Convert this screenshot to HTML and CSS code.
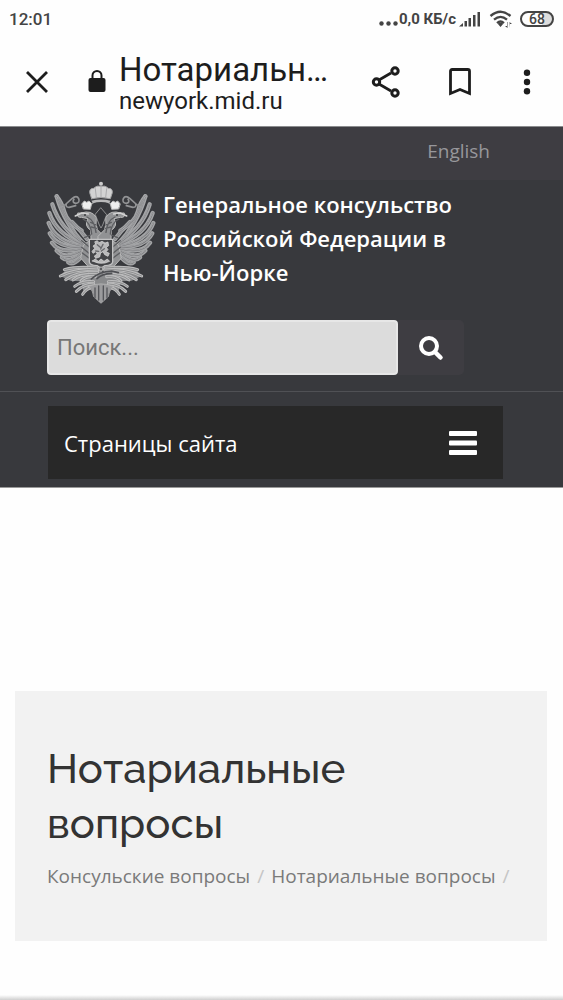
FILE: index.html
```html
<!DOCTYPE html>
<html lang="ru">
<head>
<meta charset="utf-8">
<meta name="viewport" content="width=device-width, initial-scale=1">
<title>Нотариальные вопросы</title>
<link rel="stylesheet" href="styles.css">
</head>
<body>
<div class="status">
  <span class="clock">12:01</span>
  <div class="indicators">
    <svg class="dots" width="19" height="5" viewBox="0 0 19 5"><circle cx="2.5" cy="2.5" r="2.2"/><circle cx="9.5" cy="2.5" r="2.2"/><circle cx="16.5" cy="2.5" r="2.2"/></svg>
    <span class="speed">0,0 КБ/с</span>
    <svg class="signal" width="22" height="16" viewBox="0 0 22 16"><path d="M0 15.500L4 12v3.500zM5.500 10h2.500v5.500H5.500zM9.500 7H12v8.500H9.500zM14 4h2.500v11.500H14zM18.500 1H21v14.500h-2.500z"/></svg>
    <svg class="wifi" width="24" height="18" viewBox="0 0 24 18"><path d="M1.500 6Q11.500-2.500 21.500 6M5 9.700Q11.500 4 18 9.700M8 13Q11.500 10 15 13" fill="none" stroke="#444" stroke-width="2.300"/><path d="M8.500 13.500Q11.500 12 14.500 13.500L11.500 17zM18 12v4h-2l2.500 2V12zM21 18v-4h2l-2.500-2z"/></svg>
    <span class="battery">68</span>
  </div>
</div>
<div class="browser">
  <button class="tool close" aria-label="Закрыть"><svg width="24" height="24" viewBox="0 0 24 24"><path d="M2 2l20 20M22 2L2 22" fill="none" stroke="#1d1d1d" stroke-width="2.800"/></svg></button>
  <svg class="lock" width="18" height="24" viewBox="0 0 18 24"><rect x="0.500" y="8" width="17" height="14" rx="2"/><path d="M4.500 9V5.500a4.500 4.500 0 0 1 9 0V9" fill="none" stroke="#1d1d1d" stroke-width="2"/></svg>
  <div class="address">
    <div class="tab-title">Нотариальн…</div>
    <div class="domain">newyork.mid.ru</div>
  </div>
  <div class="actions">
    <button class="tool" aria-label="Поделиться"><svg width="30" height="32" viewBox="0 0 30 32"><g fill="none" stroke="#1d1d1d"><path d="M8 14L20 7M8 18l12 7" stroke-width="2.700"/><g stroke-width="3"><circle cx="5.500" cy="16" r="3.200"/><circle cx="24" cy="5" r="3.200"/><circle cx="24" cy="27" r="3.200"/></g></g></svg></button>
    <button class="tool" aria-label="Добавить закладку"><svg width="24" height="30" viewBox="0 0 24 30"><path d="M2.500 26.500V4.200Q2.500 2.500 4.200 2.500h15.600q1.700 0 1.700 1.700v22.300L12 22.500z" fill="none" stroke="#1d1d1d" stroke-width="2.800"/></svg></button>
    <button class="tool" aria-label="Меню"><svg width="16" height="26" viewBox="0 0 16 26"><circle cx="8" cy="3.700" r="3.200"/><circle cx="8" cy="13" r="3.200"/><circle cx="8" cy="22.300" r="3.200"/></svg></button>
  </div>
</div>
<header class="site">
  <div class="languages"><a href="#">English</a></div>
  <div class="brand">
    <svg class="emblem" width="110" height="126" viewBox="17 28 330 378" fill="none" stroke-linecap="round" stroke-linejoin="round">
      <defs>
        <g id="feathers">
          <path d="M134 224Q72 158 49 77"/><path d="M130 218Q58 172 36 101"/><path d="M127 221Q48 190 27 127"/><path d="M126 226Q46 213 25 157"/><path d="M126 230Q51 231 28 188"/><path d="M128 233Q60 252 35 216"/><path d="M130 236Q75 270 49 240"/><path d="M133 239Q88 282 65 260"/><path d="M136 242Q102 289 84 275"/>
          <path d="M49 77Q64 94 72 124T124 180"/><path d="M140 205Q120 178 95 154"/>
        </g>
        <g id="tailfeathers">
          <path d="M170 292Q110 286 72 297"/><path d="M172 298Q110 292 60 316"/><path d="M172 305Q112 301 76 327"/><path d="M166 312Q120 308 98 328"/><path d="M165 318Q134 316 122 331"/>
          <path d="M160 333Q125 330 103 347"/><path d="M160 340Q130 340 108 362"/><path d="M161 348Q138 352 127 371"/>
        </g>
        <g id="half">
          <use href="#feathers" stroke="#a3a4a6" stroke-width="13"/>
          <use href="#feathers" stroke="#747578" stroke-width="4"/>
          <use href="#feathers" stroke="#c9c9ca" stroke-width="1.500"/>
          <path d="M60 316l18-20 104-8v58l-52 18-8-32-32-2z" fill="#88898b"/>
          <use href="#tailfeathers" stroke="#bdbdbe" stroke-width="9"/>
          <use href="#tailfeathers" stroke="#838486" stroke-width="2.500"/>
          <path d="M112 128Q108 142 124 140l19 4q-13 21 8 35l1 27-23 18-8 38 22 25 48-2v-88l-20-20q-6-20-3-36-14-25-45-14z" fill="#919294" stroke="#bababa" stroke-width="3"/>
          <path d="M128 145q24 12 26 45M140 139q23 10 27 46M124 210l24 20M124 230l22 18M126 247l20 15M151 155l17 8M153 169l15 4M132 201l19-8" stroke="#5c5d60" stroke-width="4"/>
          <path d="M105 136l19-9 20 3" stroke="#d1d1d1" stroke-width="5"/><circle cx="134" cy="133" r="3" fill="#3a3b3e"/>
          <path d="M60 99q7 10 17 1l18-16q14-12 20 0 5 12-9 14-12-3-5-12M78 100q-3 10 8 10l20-5M146 106q14-13 24-15" stroke="#929395" stroke-width="5"/>
          <path d="M125 99l7-8 7 4 7-4 8 8-4 17-20-1z" fill="#eee" stroke="#bbb" stroke-width="3"/>
        </g>
      </defs>
      <use href="#half"/><use href="#half" transform="matrix(-1 0 0 1 364 0)"/>
      <path d="M182 112l17 20-12 31-5 9-5-9-12-31z" fill="#333438" stroke="#bbb" stroke-width="2"/>
      <path d="M154 84l-6-18q-1-13 12-13 9-10 22-6 13-4 22 6 13 0 12 13l-6 18q-28-7-56 0z" fill="#d3d3d3" stroke="#a4a4a5" stroke-width="3"/>
      <path d="M165 54l3 27M182 48v31M199 54l-3 27" stroke="#aaaaac" stroke-width="3"/><circle cx="182" cy="39" r="6" fill="#ccc"/>
      <path d="M153 90q29-7 58 0l-5 7q-24-6-48 0z" fill="#b9b9ba"/>
      <path d="M147 206h70v67q0 10-23 12l-12 7-12-7q-23-2-23-12z" fill="#444548" stroke="#c2c2c3" stroke-width="4"/>
      <path d="M164 213l7-3 5 6 9-4 9 5 9-3 2 11-7 5 5 7-6 6 10 5-4 9-10-5-5-9-7 4-3 12-12 4-4-7 9-6-5-7-8 5-3-6 8-9-5-7 7-5zM156 271l9-6 9 7 8-7 9 7 10-7 7 7-14 5q-20 4-38-6z" fill="#b8b8b9" stroke="#dedede" stroke-width="2"/>
      <path d="M171 222l9 8M188 221l-7 14M166 241l9 1M192 234l-9 7" stroke="#68696c" stroke-width="4"/>
      <path d="M153 325q22-22 61-24l20 5M170 324q13-14 44-16M182 287l6 17" stroke="#4e4f53" stroke-width="5"/><circle cx="182" cy="295" r="6" fill="#5c5d60" stroke="#bbb" stroke-width="3"/>
      <path d="M144 347q15 13 16 31l22 20 22-20q1-18 16-31-38-15-76 0z" fill="#9b9b9d" stroke="#bbb" stroke-width="2"/>
      <path d="M164 352v30M175 346v42M189 346v42M200 352v30" stroke="#55565a" stroke-width="4"/>
    </svg>
    <div class="site-name">Генеральное консульство Российской Федерации в Нью-Йорке</div>
  </div>
  <form class="search">
    <input type="search" placeholder="Поиск..." aria-label="Поиск">
    <button type="button" aria-label="Найти"><svg width="26" height="26" viewBox="0 0 26 26"><g fill="none" stroke="#fff"><circle cx="11" cy="11" r="8" stroke-width="4"/><path d="M17 17l5.500 5.500" stroke-width="4.500" stroke-linecap="round"/></g></svg></button>
  </form>
  <nav class="navigation">
    <button class="pages"><span>Страницы сайта</span><svg width="28" height="24" viewBox="0 0 28 24" fill="#fff"><rect width="28" height="5" rx="1"/><rect y="9.500" width="28" height="5" rx="1"/><rect y="19" width="28" height="5" rx="1"/></svg></button>
  </nav>
</header>
<main class="content">
  <section class="page-heading">
    <h1>Нотариальные вопросы</h1>
    <nav class="breadcrumbs" aria-label="Навигация">
      <a href="#">Консульские вопросы</a><span>/</span><a href="#">Нотариальные вопросы</a><span>/</span>
    </nav>
  </section>
</main>
<div class="bottom-edge"></div>
</body>
</html>
```
FILE: styles.css
```css
* { box-sizing: border-box; }
body {
  margin: 0;
  min-height: 100vh;
  display: flex;
  flex-direction: column;
  background: #fefefe;
  color: #333;
  font-family: "Open Sans", "Noto Sans", sans-serif;
}
button { border: 0; padding: 0; background: none; font: inherit; color: inherit; }
a { color: inherit; text-decoration: none; }
svg { display: block; flex: none; }
.status {
  height: 38px;
  padding: 0 9px;
  display: flex;
  align-items: center;
  justify-content: space-between;
  font: 500 17px/20px Roboto, sans-serif;
  color: #444;
}
.status svg { fill: #444; }
.indicators { display: flex; align-items: center; }
.dots { margin: 8px 1px 0 0; }
.speed { margin-right: 3px; font-size: 15px; font-weight: 700; }
.signal { margin-right: 8px; }
.wifi { margin-right: 7px; }
.battery {
  width: 34px;
  height: 16px;
  border: 2px solid #444;
  border-radius: 8px;
  background: linear-gradient(90deg, #fefefe 68%, #ddd 68%);
  font-size: 14px;
  line-height: 12px;
  text-align: center;
}
.browser {
  height: 88px;
  padding: 0 28px 0 25px;
  display: flex;
  align-items: center;
  font-family: Roboto, sans-serif;
  color: #1d1d1d;
}
.browser svg { fill: #1d1d1d; }
.close { margin-right: 39px; }
.lock { margin-right: 13px; }
.address { flex: 1; min-width: 0; padding-top: 3px; white-space: nowrap; }
.tab-title { font-size: 33px; line-height: 34px; }
.domain { font-size: 24px; line-height: 28px; }
.actions { display: flex; align-items: center; gap: 47px; }
.site {
  border-top: 1px solid #8b8c8e;
  border-bottom: 1px solid #999;
  background: #38393d;
}
.languages {
  height: 53px;
  padding: 10px 73px 0 0;
  background: #3e3d42;
  color: #97979b;
  font-size: 19px;
  line-height: 28px;
  text-align: right;
}
.brand { display: flex; align-items: flex-start; padding: 0 47px 0 46px; gap: 7px; }
.site-name {
  max-width: 320px;
  padding-top: 7px;
  color: #fff;
  font-size: 22px;
  font-weight: 600;
  line-height: 34px;
}
.search {
  display: flex;
  margin: 14px 99px 16px 47px;
}
.search input {
  flex: 1;
  min-width: 0;
  height: 55px;
  padding: 0 8px;
  border: 2px solid #e7e7e7;
  border-radius: 4px;
  background: #dcdcdc;
  font: 22px/28px Roboto, sans-serif;
}
.search input::placeholder { color: #777; opacity: 1; }
.search button {
  width: 66px;
  display: grid;
  place-items: center;
  border-radius: 0 5px 5px 0;
  background: #3e3d42;
}
.navigation { padding: 14px 60px 8px 48px; border-top: 1px solid #505155; }
.pages {
  width: 100%;
  height: 73px;
  padding: 0 26px 0 16px;
  display: flex;
  align-items: center;
  justify-content: space-between;
  background: #282828;
  color: #fff;
  font-size: 22px;
}
.content { flex: 1; padding: 203px 16px 0 15px; }
.page-heading { padding: 50px 32px; background: #f2f2f2; }
h1 {
  margin: 0 0 10px;
  font: 500 42px/55px Raleway, Lato, sans-serif;
}
.breadcrumbs {
  display: flex;
  flex-wrap: wrap;
  gap: 7px;
  color: #7a7a7a;
  font-size: 19px;
  line-height: 30px;
}
.breadcrumbs span { color: #c5c5c5; }
.bottom-edge { height: 5px; background: linear-gradient(#fefefe, #cfcfcf); }
```
